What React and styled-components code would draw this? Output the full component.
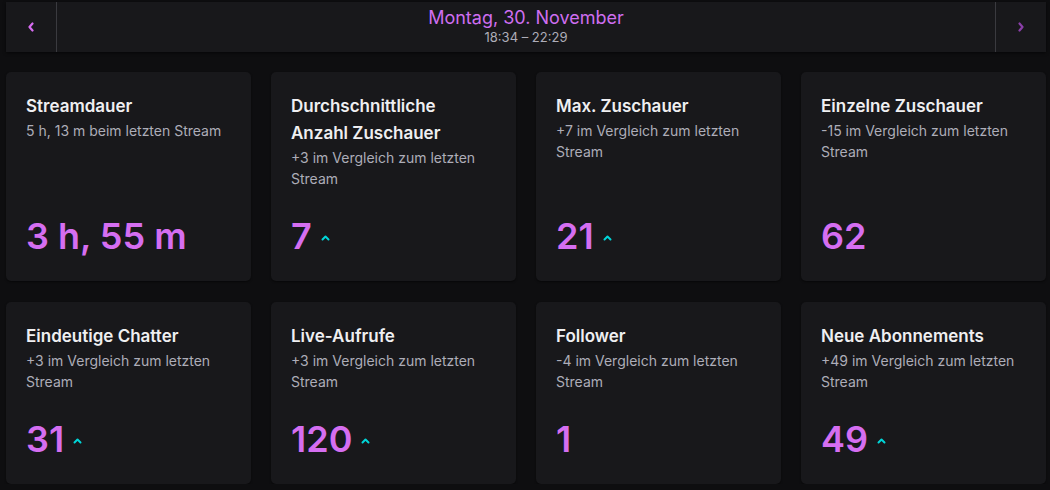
import React from 'react';
import styled, { createGlobalStyle } from 'styled-components';

const stats = [
  { title: 'Streamdauer', note: '5 h, 13 m beim letzten Stream', value: '3 h, 55 m' },
  { title: 'Durchschnittliche Anzahl Zuschauer', note: '+3 im Vergleich zum letzten Stream', value: '7', up: true },
  { title: 'Max. Zuschauer', note: '+7 im Vergleich zum letzten Stream', value: '21', up: true },
  { title: 'Einzelne Zuschauer', note: '-15 im Vergleich zum letzten Stream', value: '62' },
  { title: 'Eindeutige Chatter', note: '+3 im Vergleich zum letzten Stream', value: '31', up: true },
  { title: 'Live-Aufrufe', note: '+3 im Vergleich zum letzten Stream', value: '120', up: true },
  { title: 'Follower', note: '-4 im Vergleich zum letzten Stream', value: '1' },
  { title: 'Neue Abonnements', note: '+49 im Vergleich zum letzten Stream', value: '49', up: true },
];

const Chevron = ({ dir }) => (
  <svg width="8" height="10" viewBox="0 0 8 10">
    <path
      d={dir === 'left' ? 'M5.5 1.5 L2.5 5 L5.5 8.5' : 'M2.5 1.5 L5.5 5 L2.5 8.5'}
      fill="none"
      stroke="currentColor"
      strokeWidth="2.2"
      strokeLinecap="round"
      strokeLinejoin="round"
    />
  </svg>
);

const UpArrow = () => (
  <svg width="9" height="6" viewBox="0 0 9 6">
    <path d="M1.5 4.5 L4.5 1.5 L7.5 4.5" fill="none" stroke="#00d5d8" strokeWidth="2" strokeLinecap="round" strokeLinejoin="round" />
  </svg>
);

export default function App() {
  return (
    <>
      <GlobalStyle />
      <Page>
        <DateBar>
          <NavButton $active>
            <Chevron dir="left" />
          </NavButton>
          <DateInfo>
            <DateTitle>Montag, 30. November</DateTitle>
            <TimeRange>18:34 – 22:29</TimeRange>
          </DateInfo>
          <NavButton $right>
            <Chevron dir="right" />
          </NavButton>
        </DateBar>
        <Grid>
          {stats.map((s) => (
            <Card key={s.title}>
              <Title>{s.title}</Title>
              <Note>{s.note}</Note>
              <ValueRow>
                <Value>{s.value}</Value>
                {s.up && <UpArrow />}
              </ValueRow>
            </Card>
          ))}
        </Grid>
      </Page>
    </>
  );
}

const GlobalStyle = createGlobalStyle`
  body {
    margin: 0;
    background: #0e0e10;
    font-family: Inter, "Noto Sans", sans-serif;
  }
`;

const Page = styled.div`
  padding: 2px 4px 0 6px;
  width: 1040px;
`;

const DateBar = styled.div`
  height: 50px;
  display: flex;
  align-items: stretch;
  background: #18181b;
  box-shadow: 0 1px 3px rgba(0, 0, 0, 0.6);
`;

const NavButton = styled.div`
  width: 50px;
  display: flex;
  align-items: center;
  justify-content: center;
  color: ${(p) => (p.$active ? '#d76cf1' : '#8b3fa9')};
  border-right: ${(p) => (p.$right ? 'none' : '1px solid #3a3a3f')};
  border-left: ${(p) => (p.$right ? '1px solid #3a3a3f' : 'none')};
`;

const DateInfo = styled.div`
  flex: 1;
  display: flex;
  flex-direction: column;
  align-items: center;
  justify-content: center;
`;

const DateTitle = styled.div`
  font-size: 18px;
  line-height: 22px;
  margin-top: -2px;
  color: #cf6ef0;
`;

const TimeRange = styled.div`
  font-size: 13px;
  line-height: 16px;
  color: #adadb8;
`;

const Grid = styled.div`
  margin-top: 20px;
  display: grid;
  grid-template-columns: repeat(4, 1fr);
  gap: 21px 20px;
`;

const Card = styled.div`
  background: #18181b;
  border-radius: 5px;
  padding: 21px 20px 24px;
  display: flex;
  flex-direction: column;
  box-shadow: 0 1px 2px rgba(0, 0, 0, 0.5);
`;

const Title = styled.div`
  font-size: 17px;
  font-weight: 600;
  line-height: 27px;
  color: #efeff1;
`;

const Note = styled.div`
  font-size: 14px;
  line-height: 21px;
  color: #adadb8;
`;

const ValueRow = styled.div`
  margin-top: auto;
  padding-top: 26px;
  display: flex;
  align-items: center;
  gap: 9px;

  svg {
    margin-top: 4px;
  }
`;

const Value = styled.div`
  font-size: 36px;
  font-weight: 600;
  line-height: 42px;
  color: #d56ef1;
`;
